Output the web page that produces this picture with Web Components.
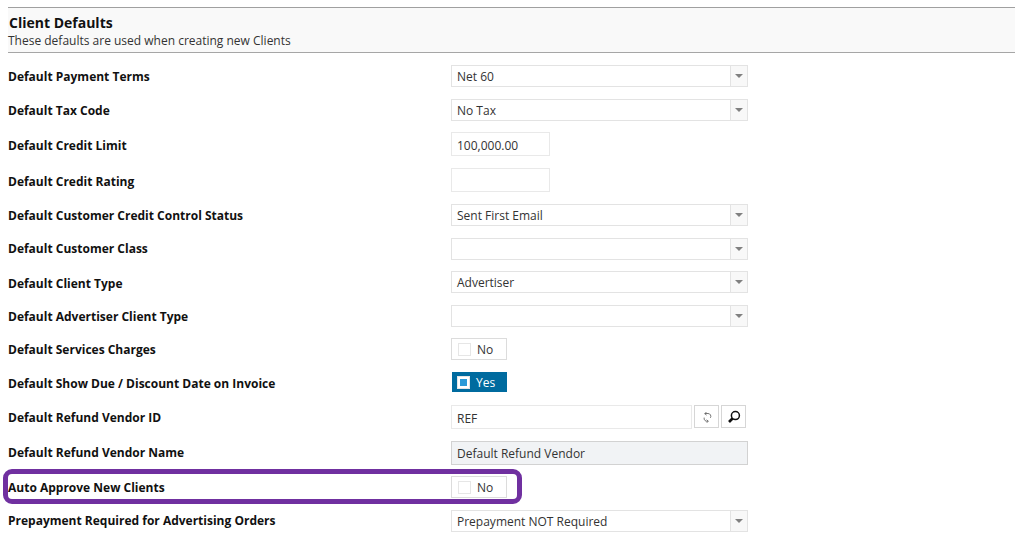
<!DOCTYPE html>
<html>
<head>
<meta charset="utf-8">
<title>Client Defaults</title>
<style>
  html, body { margin: 0; background: #fff; }
  body { font-family: "Open Sans", "Liberation Sans", sans-serif; font-size: 12px; color: #333; height: 555px; overflow: hidden; }
</style>
</head>
<body>
<client-defaults>
  <section-head title="Client Defaults">These defaults are used when creating new Clients</section-head>
  <form-row label="Default Payment Terms" h="34"><drop-list value="Net 60"></drop-list></form-row>
  <form-row label="Default Tax Code" h="33"><drop-list value="No Tax"></drop-list></form-row>
  <form-row label="Default Credit Limit" h="36" lh="28"><text-box value="100,000.00"></text-box></form-row>
  <form-row label="Default Credit Rating" h="36" lh="28"><text-box></text-box></form-row>
  <form-row label="Default Customer Credit Control Status" h="34"><drop-list value="Sent First Email"></drop-list></form-row>
  <form-row label="Default Customer Class" h="33" lh="22"><drop-list></drop-list></form-row>
  <form-row label="Default Client Type" h="34" lh="26"><drop-list value="Advertiser"></drop-list></form-row>
  <form-row label="Default Advertiser Client Type" h="33"><drop-list></drop-list></form-row>
  <form-row label="Default Services Charges" h="34"><yes-no></yes-no></form-row>
  <form-row label="Default Show Due / Discount Date on Invoice" h="33"><yes-no checked></yes-no></form-row>
  <form-row label="Default Refund Vendor ID" h="36" lh="26"><lookup-box value="REF"></lookup-box></form-row>
  <form-row label="Default Refund Vendor Name" h="35"><text-box wide disabled value="Default Refund Vendor"></text-box></form-row>
  <form-row label="Auto Approve New Clients" h="34" marked><yes-no></yes-no></form-row>
  <form-row label="Prepayment Required for Advertising Orders" h="34" lh="22"><drop-list value="Prepayment NOT Required"></drop-list></form-row>
</client-defaults>
<script>
class ClientDefaults extends HTMLElement {
  constructor() {
    super();
    this.attachShadow({mode: 'open'}).innerHTML = `<style>
      :host { display: flex; flex-direction: column; padding: 7px 1px 0 8px; }
    </style><slot></slot>`;
  }
}
customElements.define('client-defaults', ClientDefaults);

class SectionHead extends HTMLElement {
  constructor() {
    super();
    this.attachShadow({mode: 'open'}).innerHTML = `<style>
      :host { display: block; margin-bottom: 12px; background: #f9f9f9; height: 38px; padding-top: 6px;
        border-top: 1px solid #a0a0a0; border-bottom: 1px solid #a6a6a6; }
      h2 { margin: 0 0 0 1px; font-size: 14px; line-height: 17px; font-weight: 700; color: #111; }
      p { margin: 1px 0 0; font-size: 12px; line-height: 17px; color: #333; }
    </style><h2>${this.getAttribute('title')}</h2><p><slot></slot></p>`;
  }
}
customElements.define('section-head', SectionHead);

class FormRow extends HTMLElement {
  constructor() {
    super();
    const mark = this.hasAttribute('marked') ? '<i class="mark"></i>' : '';
    const lh = this.getAttribute('lh') || 24;
    this.attachShadow({mode: 'open'}).innerHTML = `<style>
      :host { display: grid; grid-template-columns: 443px 1fr; height: ${this.getAttribute('h')}px; position: relative; }
      label { font-weight: 700; color: #111; line-height: ${lh}px; white-space: nowrap; }
      .mark { position: absolute; left: -5px; top: -7px; width: 509px; height: 25px; border: 5px solid #7030a0; border-radius: 9px; }
    </style><label>${this.getAttribute('label')}</label><div><slot></slot></div>${mark}`;
  }
}
customElements.define('form-row', FormRow);

class DropList extends HTMLElement {
  constructor() {
    super();
    this.attachShadow({mode: 'open'}).innerHTML = `<style>
      :host { display: flex; width: 297px; height: 22px; box-sizing: border-box; border: 1px solid #e3e3e3; background: #fff; }
      .val { flex: 1; padding-left: 5px; line-height: 22px; color: #333; }
      .arrow { width: 16px; margin-left: auto; border-left: 1px solid #e3e3e3; background: #f8f8f8; display: flex; align-items: center; justify-content: center; }
      .arrow b { width: 0; height: 0; border: 4px solid transparent; border-top: 4px solid #808080; border-bottom: 0; }
    </style><span class="val">${this.getAttribute('value') || ''}</span><span class="arrow"><b></b></span>`;
  }
}
customElements.define('drop-list', DropList);

class TextBox extends HTMLElement {
  constructor() {
    super();
    const wide = this.hasAttribute('wide');
    const off = this.hasAttribute('disabled');
    this.attachShadow({mode: 'open'}).innerHTML = `<style>
      :host { display: block; width: ${wide ? 297 : 99}px; height: 24px; box-sizing: border-box;
        border: 1px solid ${off ? '#d2d2d2' : '#e9e9e9'}; background: ${off ? '#f1f3f5' : '#fff'};
        padding-left: 5px; line-height: ${off ? 23 : 25}px; color: #333; }
    </style>${this.getAttribute('value') || ''}`;
  }
}
customElements.define('text-box', TextBox);

class YesNo extends HTMLElement {
  constructor() {
    super();
    const on = this.hasAttribute('checked');
    this.attachShadow({mode: 'open'}).innerHTML = `<style>
      :host { display: flex; align-items: center; gap: 6px; width: ${on ? 55 : 56}px; height: ${on ? 20 : 22}px; box-sizing: border-box;
        margin-left: ${on ? 1 : 0}px; padding-left: ${on ? 5 : 6}px;
        border: ${on ? '0' : '1px solid #dcdcdc'}; background: ${on ? '#006b9f' : '#fff'}; color: ${on ? '#fff' : '#333'}; }
      .box { width: 13px; height: 13px; box-sizing: border-box; border: 1px solid #e6e6e6; background: #fff; display: flex; align-items: center; justify-content: center; }
      .box b { width: 7px; height: 7px; background: #2b9ad8; }
      .txt { padding-top: ${on ? 1 : 0}px; }
    </style><span class="box">${on ? '<b></b>' : ''}</span><span class="txt">${on ? 'Yes' : 'No'}</span>`;
  }
}
customElements.define('yes-no', YesNo);

class LookupBox extends HTMLElement {
  constructor() {
    super();
    this.attachShadow({mode: 'open'}).innerHTML = `<style>
      :host { display: flex; height: 24px; }
      .input { width: 241px; box-sizing: border-box; border: 1px solid #e9e9e9; padding-left: 5px; line-height: 25px; color: #333; }
      button { width: 25px; height: 23px; margin: 0 0 0 2px; padding: 0; background: #fff; border: 1px solid #d6d6d6; display: flex; align-items: center; justify-content: center; }
      svg { display: block; }
    </style><div class="input">${this.getAttribute('value')}</div>
    <button><svg width="9" height="11" viewBox="0 0 9 11" fill="none" stroke="#666" stroke-width=".9" style="margin:1px 0 0 1px"><path d="M2 1.5h3a2.8 2.8 0 0 1 2.4 4.3"/><path d="M3.6.2 1.6 1.6l2 1.5"/><path d="M1.2 5.6a2.9 2.9 0 0 0 3.6 3.6"/><path d="M3.6 7.8l1.8 1.5-1.8 1.3"/></svg></button>
    <button><svg width="14" height="14" viewBox="0 0 14 14" fill="none" stroke="#111"><circle cx="8.4" cy="5.6" r="4" stroke-width="1.5"/><path d="M5.5 8.5 2 12" stroke-width="2.6"/></svg></button>`;
  }
}
customElements.define('lookup-box', LookupBox);
</script>
</body>
</html>
